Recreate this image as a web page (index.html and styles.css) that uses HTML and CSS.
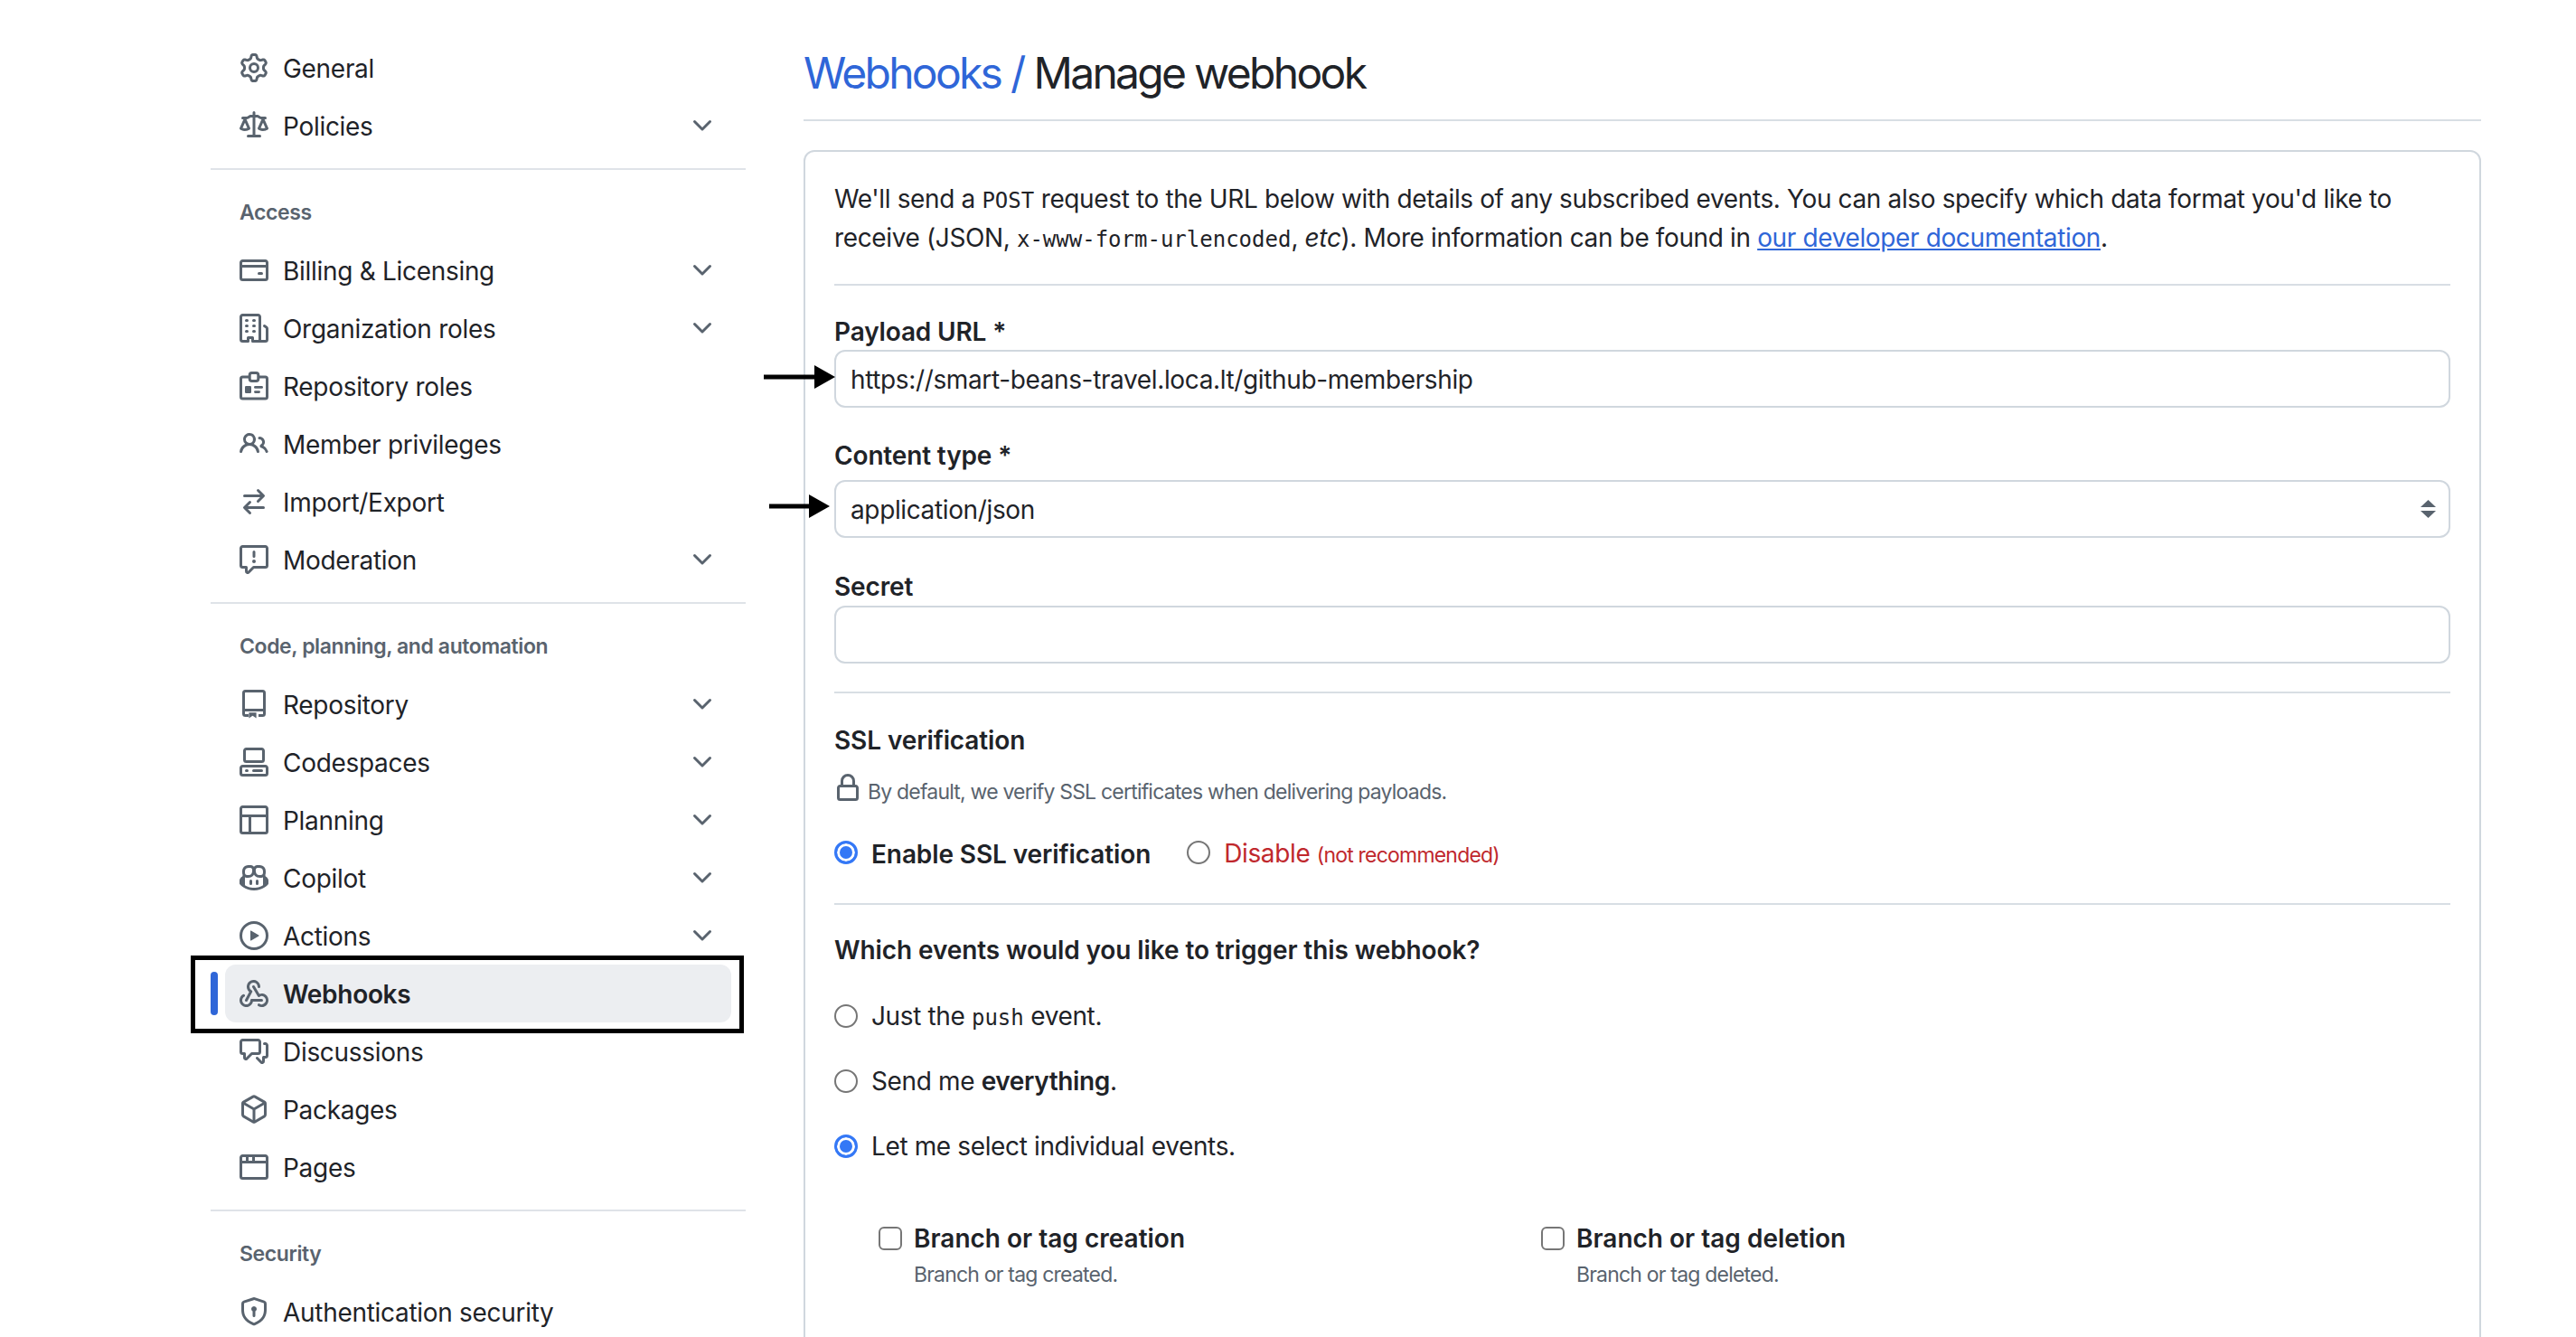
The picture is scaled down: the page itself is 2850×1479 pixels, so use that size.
FILE: index.html
```html
<!DOCTYPE html>
<html lang="en">
<head>
  <meta charset="UTF-8">
  <title>Manage webhook</title>
  <link rel="stylesheet" href="styles.css">
</head>
<body>
  <svg class="defs" width="0" height="0">
    <symbol id="gear" viewBox="0 0 16 16"><path d="M8 0a8.2 8.2 0 0 1 .701.031C9.444.095 9.99.645 10.16 1.29l.288 1.107c.018.066.079.158.212.224.231.114.454.243.668.386.123.082.233.09.299.071l1.103-.303c.644-.176 1.392.021 1.82.63.27.385.506.792.704 1.218.315.675.111 1.422-.364 1.891l-.814.806c-.049.048-.098.147-.088.294.016.257.016.515 0 .772-.01.147.038.246.088.294l.814.806c.475.469.679 1.216.364 1.891a7.977 7.977 0 0 1-.704 1.217c-.428.61-1.176.807-1.82.63l-1.102-.302c-.067-.019-.177-.011-.3.071a5.909 5.909 0 0 1-.668.386c-.133.066-.194.158-.211.224l-.29 1.106c-.168.646-.715 1.196-1.458 1.26a8.006 8.006 0 0 1-1.402 0c-.743-.064-1.289-.614-1.458-1.26l-.289-1.106c-.018-.066-.079-.158-.212-.224a5.738 5.738 0 0 1-.668-.386c-.123-.082-.233-.09-.299-.071l-1.103.303c-.644.176-1.392-.021-1.82-.63a8.12 8.12 0 0 1-.704-1.218c-.315-.675-.111-1.422.363-1.891l.815-.806c.05-.048.098-.147.088-.294a6.214 6.214 0 0 1 0-.772c.01-.147-.038-.246-.088-.294l-.815-.806C.635 6.045.431 5.298.746 4.623a7.92 7.92 0 0 1 .704-1.217c.428-.61 1.176-.807 1.82-.63l1.102.302c.067.019.177.011.3-.071.214-.143.437-.272.668-.386.133-.066.194-.158.211-.224l.29-1.106C6.009.645 6.556.095 7.299.03 7.53.01 7.764 0 8 0Zm-.571 1.525c-.036.003-.108.036-.137.146l-.289 1.105c-.147.561-.549.967-.998 1.189-.173.086-.34.183-.5.29-.417.278-.97.423-1.529.27l-1.103-.303c-.109-.03-.175.016-.195.045-.22.312-.412.644-.573.99-.014.031-.021.11.059.19l.815.806c.411.406.562.957.53 1.456a4.709 4.709 0 0 0 0 .582c.032.499-.119 1.05-.53 1.456l-.815.806c-.081.08-.073.159-.059.19.162.346.353.677.573.989.02.03.085.076.195.046l1.102-.303c.56-.153 1.113-.008 1.53.27.161.107.328.204.501.29.447.222.85.629.997 1.189l.289 1.105c.029.109.101.143.137.146a6.6 6.6 0 0 0 1.142 0c.036-.003.108-.036.137-.146l.289-1.105c.147-.561.549-.967.998-1.189.173-.086.34-.183.5-.29.417-.278.97-.423 1.529-.27l1.103.303c.109.029.175-.016.195-.045.22-.313.411-.644.573-.99.014-.031.021-.11-.059-.19l-.815-.806c-.411-.406-.562-.957-.53-1.456a4.709 4.709 0 0 0 0-.582c-.032-.499.119-1.05.53-1.456l.815-.806c.081-.08.073-.159.059-.19a6.464 6.464 0 0 0-.573-.989c-.02-.03-.085-.076-.195-.046l-1.102.303c-.56.153-1.113.008-1.53-.27a4.44 4.44 0 0 0-.501-.29c-.447-.222-.85-.629-.997-1.189l-.289-1.105c-.029-.11-.101-.143-.137-.146a6.6 6.6 0 0 0-1.142 0ZM11 8a3 3 0 1 1-6 0 3 3 0 0 1 6 0ZM9.5 8a1.5 1.5 0 1 0-3.001.001A1.5 1.5 0 0 0 9.5 8Z"/></symbol>
    <symbol id="law" viewBox="0 0 16 16"><path d="M8.75.75V2h.985c.304 0 .603.08.867.231l1.29.736c.038.022.08.033.124.033h2.234a.75.75 0 0 1 0 1.5h-.427l2.111 4.692a.75.75 0 0 1-.154.838l-.53-.53.529.531-.001.002-.002.002-.006.006-.006.005-.01.01-.045.04c-.21.176-.441.327-.686.45C14.556 10.78 13.88 11 13 11a4.498 4.498 0 0 1-2.023-.454 3.544 3.544 0 0 1-.686-.45l-.045-.04-.016-.015-.006-.006-.004-.004v-.001a.75.75 0 0 1-.154-.838L12.178 4.5h-.162c-.305 0-.604-.079-.868-.231l-1.29-.736a.245.245 0 0 0-.124-.033H8.75V13h2.5a.75.75 0 0 1 0 1.5h-6.5a.75.75 0 0 1 0-1.5h2.5V3.5h-.984a.245.245 0 0 0-.124.033l-1.289.737c-.265.15-.564.23-.869.23h-.162l2.112 4.692a.75.75 0 0 1-.154.838l-.53-.53.529.531-.001.002-.002.002-.006.006-.016.015-.045.04c-.21.176-.441.327-.686.45C4.556 10.78 3.88 11 3 11a4.498 4.498 0 0 1-2.023-.454 3.544 3.544 0 0 1-.686-.45l-.045-.04-.016-.015-.006-.006-.004-.004v-.001a.75.75 0 0 1-.154-.838L2.178 4.5H1.75a.75.75 0 0 1 0-1.5h2.234a.249.249 0 0 0 .125-.033l1.288-.737c.265-.15.564-.23.869-.23h.984V.75a.75.75 0 0 1 1.5 0Zm2.945 8.477c.285.135.718.273 1.305.273s1.02-.138 1.305-.273L13 6.327Zm-10 0c.285.135.718.273 1.305.273s1.02-.138 1.305-.273L3 6.327Z"/></symbol>
    <symbol id="card" viewBox="0 0 16 16"><path d="M10.75 9a.75.75 0 0 0 0 1.5h1.5a.75.75 0 0 0 0-1.5h-1.5Z"/><path d="M0 3.75C0 2.784.784 2 1.75 2h12.5c.966 0 1.75.784 1.75 1.75v8.5A1.75 1.75 0 0 1 14.25 14H1.75A1.75 1.75 0 0 1 0 12.25ZM14.5 6.5h-13v5.75c0 .138.112.25.25.25h12.5a.25.25 0 0 0 .25-.25Zm0-2.75a.25.25 0 0 0-.25-.25H1.75a.25.25 0 0 0-.25.25V5h13Z"/></symbol>
    <symbol id="org" viewBox="0 0 16 16"><path d="M1.75 16A1.75 1.75 0 0 1 0 14.25V1.75C0 .784.784 0 1.75 0h8.5C11.216 0 12 .784 12 1.75v12.5c0 .085-.006.168-.018.25h2.268a.25.25 0 0 0 .25-.25V8.285a.25.25 0 0 0-.111-.208l-1.055-.703a.749.749 0 1 1 .832-1.248l1.055.703c.487.325.779.871.779 1.456v5.965A1.75 1.75 0 0 1 14.25 16h-3.5a.766.766 0 0 1-.197-.026c-.099.017-.2.026-.303.026h-3a.75.75 0 0 1-.75-.75V14h-1v1.25a.75.75 0 0 1-.75.75Zm-.25-1.75c0 .138.112.25.25.25H4v-1.25a.75.75 0 0 1 .75-.75h2.5a.75.75 0 0 1 .75.75v1.25h2.25a.25.25 0 0 0 .25-.25V1.75a.25.25 0 0 0-.25-.25h-8.5a.25.25 0 0 0-.25.25ZM3.75 6h.5a.75.75 0 0 1 0 1.5h-.5a.75.75 0 0 1 0-1.5ZM3 3.75A.75.75 0 0 1 3.75 3h.5a.75.75 0 0 1 0 1.5h-.5A.75.75 0 0 1 3 3.75Zm4 3A.75.75 0 0 1 7.75 6h.5a.75.75 0 0 1 0 1.5h-.5A.75.75 0 0 1 7 6.75ZM7.75 3h.5a.75.75 0 0 1 0 1.5h-.5a.75.75 0 0 1 0-1.5ZM3 9.75A.75.75 0 0 1 3.75 9h.5a.75.75 0 0 1 0 1.5h-.5A.75.75 0 0 1 3 9.75ZM7.75 9h.5a.75.75 0 0 1 0 1.5h-.5a.75.75 0 0 1 0-1.5Z"/></symbol>
    <symbol id="badge" viewBox="0 0 16 16"><path d="M5.6 3H1.75a1 1 0 0 0-1 1v10a1 1 0 0 0 1 1h12.5a1 1 0 0 0 1-1V4a1 1 0 0 0-1-1H10.4" fill="none" stroke="currentColor" stroke-width="1.5"/><rect x="5.6" y=".75" width="4.8" height="4.5" rx="1.2" fill="none" stroke="currentColor" stroke-width="1.5"/><rect x="3" y="8" width="3.5" height="4" rx=".6"/><rect x="8" y="8" width="5" height="1.4" rx=".7"/><rect x="8" y="10.6" width="3.5" height="1.4" rx=".7"/></symbol>
    <symbol id="people" viewBox="0 0 16 16"><path d="M2 5.5a3.5 3.5 0 1 1 5.898 2.549 5.508 5.508 0 0 1 3.034 4.084.75.75 0 1 1-1.482.235 4 4 0 0 0-7.9 0 .75.75 0 0 1-1.482-.236A5.507 5.507 0 0 1 3.102 8.05 3.493 3.493 0 0 1 2 5.5ZM11 4a3.001 3.001 0 0 1 2.22 5.018 5.01 5.01 0 0 1 2.56 3.012.749.749 0 0 1-.885.954.752.752 0 0 1-.549-.514 3.507 3.507 0 0 0-2.522-2.372.75.75 0 0 1-.574-.73v-.352a.75.75 0 0 1 .416-.672A1.5 1.5 0 0 0 11 5.5.75.75 0 0 1 11 4Zm-5.5-.5a2 2 0 1 0-.001 3.999A2 2 0 0 0 5.5 3.5Z"/></symbol>
    <symbol id="switch" viewBox="0 0 16 16"><path d="M5.22 14.78a.75.75 0 0 0 1.06-1.06L4.56 12h8.69a.75.75 0 0 0 0-1.5H4.56l1.72-1.72a.75.75 0 0 0-1.06-1.06l-3 3a.75.75 0 0 0 0 1.06l3 3Zm5.56-6.5a.75.75 0 1 1-1.06-1.06l1.72-1.72H2.75a.75.75 0 0 1 0-1.5h8.69L9.72 2.28a.75.75 0 0 1 1.06-1.06l3 3a.75.75 0 0 1 0 1.06l-3 3Z"/></symbol>
    <symbol id="report" viewBox="0 0 16 16"><path d="M0 1.75C0 .784.784 0 1.75 0h12.5C15.216 0 16 .784 16 1.75v9.5A1.75 1.75 0 0 1 14.25 13H8.06l-2.573 2.573A1.458 1.458 0 0 1 3 14.543V13H1.75A1.75 1.75 0 0 1 0 11.25Zm1.75-.25a.25.25 0 0 0-.25.25v9.5c0 .138.112.25.25.25h2a.75.75 0 0 1 .75.75v2.19l2.72-2.72a.749.749 0 0 1 .53-.22h6.5a.25.25 0 0 0 .25-.25v-9.5a.25.25 0 0 0-.25-.25Zm7 2.25v2.5a.75.75 0 0 1-1.5 0v-2.5a.75.75 0 0 1 1.5 0ZM9 9a1 1 0 1 1-2 0 1 1 0 0 1 2 0Z"/></symbol>
    <symbol id="repo" viewBox="0 0 16 16"><path d="M5 14.25H3.25a1 1 0 0 1-1-1V1.75a1 1 0 0 1 1-1h9.5a1 1 0 0 1 1 1v11.5a1 1 0 0 1-1 1H10.5M2.25 11.25h11.5" fill="none" stroke="currentColor" stroke-width="1.5"/><path d="M5.2 12.6h4.1v3.1l-2.05-1.3-2.05 1.3Z"/></symbol>
    <symbol id="codespaces" viewBox="0 0 16 16"><path d="M0 11.25c0-.966.784-1.75 1.75-1.75h12.5c.966 0 1.75.784 1.75 1.75v3A1.75 1.75 0 0 1 14.25 16H1.75A1.75 1.75 0 0 1 0 14.25Zm2-9.5C2 .784 2.784 0 3.75 0h8.5C13.216 0 14 .784 14 1.75v5a1.75 1.75 0 0 1-1.75 1.75h-8.5A1.75 1.75 0 0 1 2 6.75Zm1.75-.25a.25.25 0 0 0-.25.25v5c0 .138.112.25.25.25h8.5a.25.25 0 0 0 .25-.25v-5a.25.25 0 0 0-.25-.25Zm-2 9.5a.25.25 0 0 0-.25.25v3c0 .138.112.25.25.25h12.5a.25.25 0 0 0 .25-.25v-3a.25.25 0 0 0-.25-.25Z"/><path d="M7 12.75a.75.75 0 0 1 .75-.75h4.5a.75.75 0 0 1 0 1.5h-4.5a.75.75 0 0 1-.75-.75Zm-4 0a.75.75 0 0 1 .75-.75h.5a.75.75 0 0 1 0 1.5h-.5a.75.75 0 0 1-.75-.75Z"/></symbol>
    <symbol id="table" viewBox="0 0 16 16"><path d="M0 1.75C0 .784.784 0 1.75 0h12.5C15.216 0 16 .784 16 1.75v12.5A1.75 1.75 0 0 1 14.25 16H1.75A1.75 1.75 0 0 1 0 14.25ZM6.5 6.5v8h7.75a.25.25 0 0 0 .25-.25V6.5Zm8-1.5V1.75a.25.25 0 0 0-.25-.25H1.75a.25.25 0 0 0-.25.25V5Zm-13 1.5v7.75c0 .138.112.25.25.25H5v-8Z"/></symbol>
    <symbol id="copilot" viewBox="0 0 16 16"><path d="M7.998 15.035c-4.562 0-7.873-2.914-7.998-3.749V9.338c.085-.628.677-1.686 1.588-2.065.013-.07.024-.143.036-.218.029-.183.06-.384.126-.612-.201-.508-.254-1.084-.254-1.656 0-.87.128-1.769.693-2.484.579-.733 1.494-1.124 2.724-1.261 1.206-.134 2.262.034 2.944.765.05.053.096.108.139.165.044-.057.094-.112.143-.165.682-.731 1.738-.899 2.944-.765 1.23.137 2.145.528 2.724 1.261.566.715.693 1.614.693 2.484 0 .572-.053 1.148-.254 1.656.066.228.098.429.126.612.012.076.024.148.037.218.924.385 1.522 1.471 1.591 2.095v1.872c0 .766-3.351 3.795-8.002 3.795Zm0-1.485c2.28 0 4.584-1.11 5.002-1.433V7.862l-.023-.116c-.49.21-1.075.291-1.727.291-1.146 0-2.059-.327-2.71-.991A3.222 3.222 0 0 1 8 6.303a3.24 3.24 0 0 1-.544.743c-.65.664-1.563.991-2.71.991-.652 0-1.236-.081-1.727-.291l-.023.116v4.255c.419.323 2.722 1.433 5.002 1.433ZM6.762 2.83c-.193-.206-.637-.413-1.682-.297-1.019.113-1.479.404-1.713.7-.247.312-.369.789-.369 1.554 0 .793.129 1.171.308 1.371.162.181.519.379 1.442.379.853 0 1.339-.235 1.638-.54.315-.322.527-.827.617-1.553.117-.935-.037-1.395-.241-1.614Zm4.155-.297c-1.044-.116-1.488.091-1.681.297-.204.219-.359.679-.242 1.614.091.726.303 1.231.618 1.553.299.305.784.54 1.638.54.922 0 1.28-.198 1.442-.379.179-.2.308-.578.308-1.371 0-.765-.123-1.242-.37-1.554-.233-.296-.693-.587-1.713-.7Z"/><path d="M6.25 9.037a.75.75 0 0 1 .75.75v1.501a.75.75 0 0 1-1.5 0V9.787a.75.75 0 0 1 .75-.75Zm4.25.75v1.501a.75.75 0 0 1-1.5 0V9.787a.75.75 0 0 1 1.5 0Z"/></symbol>
    <symbol id="play" viewBox="0 0 16 16"><path d="M8 0a8 8 0 1 1 0 16A8 8 0 0 1 8 0ZM1.5 8a6.5 6.5 0 1 0 13 0 6.5 6.5 0 0 0-13 0Zm4.879-2.773 4.264 2.559a.25.25 0 0 1 0 .428l-4.264 2.559A.25.25 0 0 1 6 10.559V5.442a.25.25 0 0 1 .379-.215Z"/></symbol>
    <symbol id="webhook" viewBox="0 0 16 16"><path d="M5.5 4.25a2.25 2.25 0 0 1 4.5 0 .75.75 0 0 0 1.5 0 3.75 3.75 0 1 0-6.14 2.889l-2.272 4.258a.75.75 0 0 0 1.324.706L7 7.25a.75.75 0 0 0-.309-1.015A2.25 2.25 0 0 1 5.5 4.25Z"/><path d="M7.364 3.607a.75.75 0 0 1 1.03.257l2.608 4.349a3.75 3.75 0 1 1-.628 6.785.75.75 0 0 1 .752-1.299 2.25 2.25 0 1 0-.033-3.88.75.75 0 0 1-1.03-.256L7.107 4.636a.75.75 0 0 1 .257-1.03Z"/><path d="M2.9 8.776A.75.75 0 0 1 2.625 9.8 2.25 2.25 0 1 0 6 11.75a.75.75 0 0 1 .75-.751h5.5a.75.75 0 0 1 0 1.5H7.425a3.751 3.751 0 1 1-5.55-3.998.75.75 0 0 1 1.024.274Z"/></symbol>
    <symbol id="discussion" viewBox="0 0 16 16"><path d="M1.75 1h8.5c.966 0 1.75.784 1.75 1.75v5.5A1.75 1.75 0 0 1 10.25 10H7.061l-2.574 2.573A1.458 1.458 0 0 1 2 11.543V10h-.25A1.75 1.75 0 0 1 0 8.25v-5.5C0 1.784.784 1 1.75 1ZM1.5 2.75v5.5c0 .138.112.25.25.25h1a.75.75 0 0 1 .75.75v2.19l2.72-2.72a.749.749 0 0 1 .53-.22h3.5a.25.25 0 0 0 .25-.25v-5.5a.25.25 0 0 0-.25-.25h-8.5a.25.25 0 0 0-.25.25Zm13 2a.25.25 0 0 0-.25-.25h-.5a.75.75 0 0 1 0-1.5h.5c.966 0 1.75.784 1.75 1.75v5.5A1.75 1.75 0 0 1 14.25 12H14v1.543a1.458 1.458 0 0 1-2.487 1.03L9.22 12.28a.749.749 0 0 1 .326-1.275.749.749 0 0 1 .734.215l2.22 2.22v-2.19a.75.75 0 0 1 .75-.75h1a.25.25 0 0 0 .25-.25Z"/></symbol>
    <symbol id="package" viewBox="0 0 16 16"><path d="m8.878.392 5.25 3.045c.54.314.872.89.872 1.514v6.098a1.75 1.75 0 0 1-.872 1.514l-5.25 3.045a1.75 1.75 0 0 1-1.756 0l-5.25-3.045A1.75 1.75 0 0 1 1 11.049V4.951c0-.624.332-1.201.872-1.514L7.122.392a1.75 1.75 0 0 1 1.756 0ZM7.875 1.69l-4.63 2.685L8 7.133l4.755-2.758-4.63-2.685a.248.248 0 0 0-.25 0ZM2.5 5.677v5.372c0 .09.047.171.125.216l4.625 2.683V8.432Zm6.25 8.271 4.625-2.683a.25.25 0 0 0 .125-.216V5.677L8.75 8.432Z"/></symbol>
    <symbol id="browser" viewBox="0 0 16 16"><path d="M0 2.75C0 1.784.784 1 1.75 1h12.5c.966 0 1.75.784 1.75 1.75v10.5A1.75 1.75 0 0 1 14.25 15H1.75A1.75 1.75 0 0 1 0 13.25ZM14.5 6h-13v7.25c0 .138.112.25.25.25h12.5a.25.25 0 0 0 .25-.25Zm-6-3.5v2h6V2.75a.25.25 0 0 0-.25-.25ZM5 2.5v2h2v-2Zm-3.25 0a.25.25 0 0 0-.25.25V4.5h2v-2Z"/></symbol>
    <symbol id="shield" viewBox="0 0 16 16"><path d="m8.533.133 5.25 1.68A1.75 1.75 0 0 1 15 3.48V7c0 1.566-.32 3.182-1.303 4.682-.983 1.498-2.585 2.813-5.032 3.855a1.697 1.697 0 0 1-1.33 0c-2.447-1.042-4.049-2.357-5.032-3.855C1.32 10.182 1 8.566 1 7V3.48a1.75 1.75 0 0 1 1.217-1.667l5.25-1.68a1.748 1.748 0 0 1 1.066 0Zm-.61 1.429.001.001-5.25 1.68a.251.251 0 0 0-.174.237V7c0 1.36.275 2.666 1.057 3.859.784 1.194 2.121 2.342 4.366 3.298a.196.196 0 0 0 .154 0c2.245-.957 3.582-2.103 4.366-3.297C13.225 9.666 13.5 8.358 13.5 7V3.48a.25.25 0 0 0-.174-.238l-5.25-1.68a.25.25 0 0 0-.153 0ZM9.5 6.5c0 .536-.286 1.032-.75 1.3v2.45a.75.75 0 0 1-1.5 0V7.8A1.5 1.5 0 1 1 9.5 6.5Z"/></symbol>
    <symbol id="chevron" viewBox="0 0 16 16"><path d="M12.78 5.22a.749.749 0 0 1 0 1.06l-4.25 4.25a.749.749 0 0 1-1.06 0L3.22 6.28a.749.749 0 1 1 1.06-1.06L8 8.939l3.72-3.719a.749.749 0 0 1 1.06 0Z"/></symbol>
    <symbol id="lock" viewBox="0 0 16 16"><path d="M4 4a4 4 0 0 1 8 0v2h.25c.966 0 1.75.784 1.75 1.75v5.5A1.75 1.75 0 0 1 12.25 15h-8.5A1.75 1.75 0 0 1 2 13.25v-5.5C2 6.784 2.784 6 3.75 6H4Zm8.25 3.5h-8.5a.25.25 0 0 0-.25.25v5.5c0 .138.112.25.25.25h8.5a.25.25 0 0 0 .25-.25v-5.5a.25.25 0 0 0-.25-.25ZM10.5 6V4a2.5 2.5 0 1 0-5 0v2Z"/></symbol>
  </svg>

  <div class="page">
    <nav class="sidebar">
      <a class="nav-item"><svg class="icon"><use href="#gear"/></svg><span>General</span></a>
      <a class="nav-item"><svg class="icon"><use href="#law"/></svg><span>Policies</span><svg class="chevron"><use href="#chevron"/></svg></a>
      <hr class="nav-divider">

      <h2 class="nav-heading">Access</h2>
      <a class="nav-item"><svg class="icon"><use href="#card"/></svg><span>Billing &amp; Licensing</span><svg class="chevron"><use href="#chevron"/></svg></a>
      <a class="nav-item"><svg class="icon"><use href="#org"/></svg><span>Organization roles</span><svg class="chevron"><use href="#chevron"/></svg></a>
      <a class="nav-item"><svg class="icon"><use href="#badge"/></svg><span>Repository roles</span></a>
      <a class="nav-item"><svg class="icon"><use href="#people"/></svg><span>Member privileges</span></a>
      <a class="nav-item"><svg class="icon"><use href="#switch"/></svg><span>Import/Export</span></a>
      <a class="nav-item"><svg class="icon"><use href="#report"/></svg><span>Moderation</span><svg class="chevron"><use href="#chevron"/></svg></a>
      <hr class="nav-divider">

      <h2 class="nav-heading">Code, planning, and automation</h2>
      <a class="nav-item"><svg class="icon"><use href="#repo"/></svg><span>Repository</span><svg class="chevron"><use href="#chevron"/></svg></a>
      <a class="nav-item"><svg class="icon"><use href="#codespaces"/></svg><span>Codespaces</span><svg class="chevron"><use href="#chevron"/></svg></a>
      <a class="nav-item"><svg class="icon"><use href="#table"/></svg><span>Planning</span><svg class="chevron"><use href="#chevron"/></svg></a>
      <a class="nav-item"><svg class="icon"><use href="#copilot"/></svg><span>Copilot</span><svg class="chevron"><use href="#chevron"/></svg></a>
      <a class="nav-item"><svg class="icon"><use href="#play"/></svg><span>Actions</span><svg class="chevron"><use href="#chevron"/></svg></a>
      <a class="nav-item active"><svg class="icon"><use href="#webhook"/></svg><span>Webhooks</span><i class="callout-box"></i></a>
      <a class="nav-item"><svg class="icon"><use href="#discussion"/></svg><span>Discussions</span></a>
      <a class="nav-item"><svg class="icon"><use href="#package"/></svg><span>Packages</span></a>
      <a class="nav-item"><svg class="icon"><use href="#browser"/></svg><span>Pages</span></a>
      <hr class="nav-divider">

      <h2 class="nav-heading">Security</h2>
      <a class="nav-item"><svg class="icon"><use href="#shield"/></svg><span>Authentication security</span></a>
    </nav>

    <main class="content">
      <h1 class="page-title"><a class="crumb">Webhooks /</a> Manage webhook</h1>

      <form class="panel">
        <p class="intro">We'll send a <code>POST</code> request to the URL below with details of any subscribed events. You can also specify which data format you'd like to receive (JSON, <code>x-www-form-urlencoded</code>, <em>etc</em>). More information can be found in <a class="link">our developer documentation</a>.</p>
        <hr class="rule intro-rule">

        <div class="field field-url">
          <label>Payload URL *</label>
          <input class="text-input" type="text" value="https://smart-beans-travel.loca.lt/github-membership">
          <svg class="arrow arrow-url" viewBox="0 0 79 26"><path d="M0 10.5h56V0l23 13-23 13V15.5H0Z"/></svg>
        </div>

        <div class="field field-type">
          <label>Content type *</label>
          <div class="select-wrap">
            <select class="text-input"><option>application/json</option></select>
            <svg class="select-arrows" viewBox="0 0 17 20"><path d="M8.5 0 17 8H0ZM0 12h17l-8.5 8Z"/></svg>
          </div>
          <svg class="arrow arrow-type" viewBox="0 0 67 26"><path d="M0 10.5h44V0l23 13-23 13V15.5H0Z"/></svg>
        </div>

        <div class="field field-secret">
          <label>Secret</label>
          <input class="text-input" type="password">
        </div>
        <hr class="rule secret-rule">

        <h3 class="group-title">SSL verification</h3>
        <p class="note"><svg class="lock"><use href="#lock"/></svg>By default, we verify SSL certificates when delivering payloads.</p>
        <div class="ssl-options">
          <label class="choice strong"><input type="radio" name="ssl" checked><span>Enable SSL verification</span></label>
          <label class="choice danger"><input type="radio" name="ssl"><span>Disable <small>(not recommended)</small></span></label>
        </div>
        <hr class="rule ssl-rule">

        <h3 class="group-title events-title">Which events would you like to trigger this webhook?</h3>
        <div class="event-modes">
          <label class="choice"><input type="radio" name="mode"><span>Just the <code>push</code> event.</span></label>
          <label class="choice"><input type="radio" name="mode"><span>Send me <b>everything</b>.</span></label>
          <label class="choice"><input type="radio" name="mode" checked><span>Let me select individual events.</span></label>
        </div>

        <div class="event-grid">
          <div class="event">
            <input type="checkbox">
            <div>
              <div class="event-name">Branch or tag creation</div>
              <div class="event-desc">Branch or tag created.</div>
            </div>
          </div>
          <div class="event">
            <input type="checkbox">
            <div>
              <div class="event-name">Branch or tag deletion</div>
              <div class="event-desc">Branch or tag deleted.</div>
            </div>
          </div>
        </div>
      </form>
    </main>
  </div>
</body>
</html>
```

FILE: styles.css
```css
html, body {
  margin: 0;
  height: 100%;
  overflow: hidden;
  background: #fff;
}

body {
  font-family: Inter, "Liberation Sans", sans-serif;
  font-size: 28px;
  color: #1f2328;
}

.defs {
  position: absolute;
}

.page {
  display: flex;
  gap: 64px;
  height: 1479px;
  padding: 43px 105px 0 233px;
  box-sizing: border-box;
  overflow: hidden;
}

/* sidebar */
.sidebar {
  flex: 0 0 592px;
  width: 592px;
}

.nav-item {
  position: relative;
  display: flex;
  align-items: center;
  gap: 16px;
  width: 560px;
  height: 64px;
  margin-left: 16px;
  padding: 0 16px;
  box-sizing: border-box;
  border-radius: 12px;
  letter-spacing: -0.3px;
}

.nav-item span {
  flex: 1;
  margin-top: 2px;
}

.icon {
  flex: none;
  width: 32px;
  height: 32px;
  fill: #59636e;
  color: #59636e;
}

.chevron {
  flex: none;
  width: 32px;
  height: 32px;
  fill: #59636e;
}

.nav-item.active {
  background: #eceef1;
  font-weight: 600;
}

.nav-item.active::before {
  content: "";
  position: absolute;
  left: -16px;
  top: 8px;
  width: 8px;
  height: 48px;
  border-radius: 4px;
  background: #2f66d8;
}

.callout-box {
  position: absolute;
  left: -38px;
  top: -10px;
  width: 612px;
  height: 86px;
  box-sizing: border-box;
  border: 5px solid #000;
  pointer-events: none;
}

.nav-divider {
  height: 2px;
  margin: 15px 0 28px;
  border: 0;
  background: #dfe3e8;
}

.nav-heading {
  margin: 0 0 14px 32px;
  padding-top: 1px;
  font-size: 23px;
  line-height: 36px;
  font-weight: 600;
  letter-spacing: -0.4px;
  color: #59636e;
}

/* main */
.content {
  flex: 1;
  min-width: 0;
}

.page-title {
  margin: 8px 0 32px;
  padding-bottom: 21px;
  border-bottom: 2px solid #d8dee4;
  font-size: 48px;
  line-height: 60px;
  font-weight: 400;
  letter-spacing: -2.7px;
}

.crumb, .link {
  color: #2f66d8;
}

.link {
  text-decoration: underline;
}

.panel {
  height: 1600px;
  padding: 31px 32px;
  box-sizing: border-box;
  border: 2px solid #d0d7de;
  border-radius: 12px;
  letter-spacing: -0.37px;
}

.intro {
  margin: 0;
  line-height: 43px;
}

code {
  font-family: "DejaVu Sans Mono", "Liberation Mono", monospace;
  font-size: 24px;
  line-height: 1;
  letter-spacing: 0;
}

.rule {
  height: 2px;
  margin: 0;
  border: 0;
  background: #d8dee4;
}

.intro-rule {
  margin: 29px 0 31px;
}

.field {
  position: relative;
}

.field > label {
  display: block;
  font-weight: 600;
  line-height: 40px;
  letter-spacing: -0.15px;
}

.field-type {
  margin-top: 33px;
}

.field-type > label {
  margin-bottom: 7px;
}

.field-secret {
  margin-top: 34px;
}

.field-secret > label {
  margin-bottom: 1px;
}

.text-input {
  display: block;
  width: 100%;
  height: 64px;
  padding: 2px 16px 0;
  box-sizing: border-box;
  border: 2px solid #d0d7de;
  border-radius: 12px;
  background: #fff;
  font: inherit;
  letter-spacing: inherit;
  color: inherit;
  appearance: none;
  outline: none;
}

.select-wrap {
  position: relative;
}

.select-arrows {
  position: absolute;
  right: 16px;
  top: 22px;
  width: 17px;
  height: 20px;
  fill: #59636e;
}

.arrow {
  position: absolute;
  height: 26px;
}

.arrow-url {
  left: -78px;
  top: 57px;
  width: 79px;
}

.arrow-type {
  left: -72px;
  top: 63px;
  width: 67px;
}

.secret-rule {
  margin: 31px 0 34px;
}

.group-title {
  margin: 0;
  font-size: 28px;
  line-height: 36px;
  font-weight: 600;
  letter-spacing: -0.1px;
}

.note {
  display: flex;
  align-items: center;
  margin: 21px 0 0;
  font-size: 23px;
  line-height: 36px;
  letter-spacing: -0.8px;
  color: #59636e;
}

.lock {
  width: 32px;
  height: 32px;
  margin: -8px 6px 0 -1px;
  fill: #59636e;
}

.ssl-options {
  display: flex;
  gap: 40px;
  margin-top: 30px;
}

.ssl-options input {
  margin-bottom: 4px;
}

.choice {
  display: flex;
  align-items: center;
  gap: 15px;
  line-height: 40px;
}

.choice.strong {
  font-weight: 600;
  letter-spacing: -0.1px;
}

.choice b {
  font-weight: 600;
}

.choice.danger {
  color: #c0282d;
}

.choice small {
  font-size: 23px;
  letter-spacing: -0.8px;
}

input[type="radio"], input[type="checkbox"] {
  flex: none;
  width: 26px;
  height: 26px;
  margin: 0;
  box-sizing: border-box;
  border: 2px solid #767676;
  background: #fff;
  appearance: none;
}

input[type="radio"] {
  border-radius: 50%;
}

input[type="radio"]:checked {
  border: 3px solid #3478f6;
  background: #3478f6;
  box-shadow: inset 0 0 0 3px #fff;
}

input[type="checkbox"] {
  border-radius: 6px;
}

.ssl-options input[type="radio"] {
  margin-bottom: 4px;
}

.ssl-rule {
  margin: 33px 0 0;
}

.events-title {
  margin-top: 32px;
}

.event-modes {
  display: flex;
  flex-direction: column;
  gap: 32px;
  margin-top: 35px;
}

.event-grid {
  display: grid;
  grid-template-columns: 733px 733px;
  margin: 62px 0 0 49px;
}

.event {
  display: flex;
  align-items: flex-start;
  gap: 13px;
}

.event input {
  margin-top: 7px;
}

.event-name {
  font-weight: 600;
  line-height: 40px;
  letter-spacing: 0;
}

.event-desc {
  margin-top: 2px;
  font-size: 23px;
  line-height: 36px;
  letter-spacing: -0.8px;
  color: #59636e;
}
```
